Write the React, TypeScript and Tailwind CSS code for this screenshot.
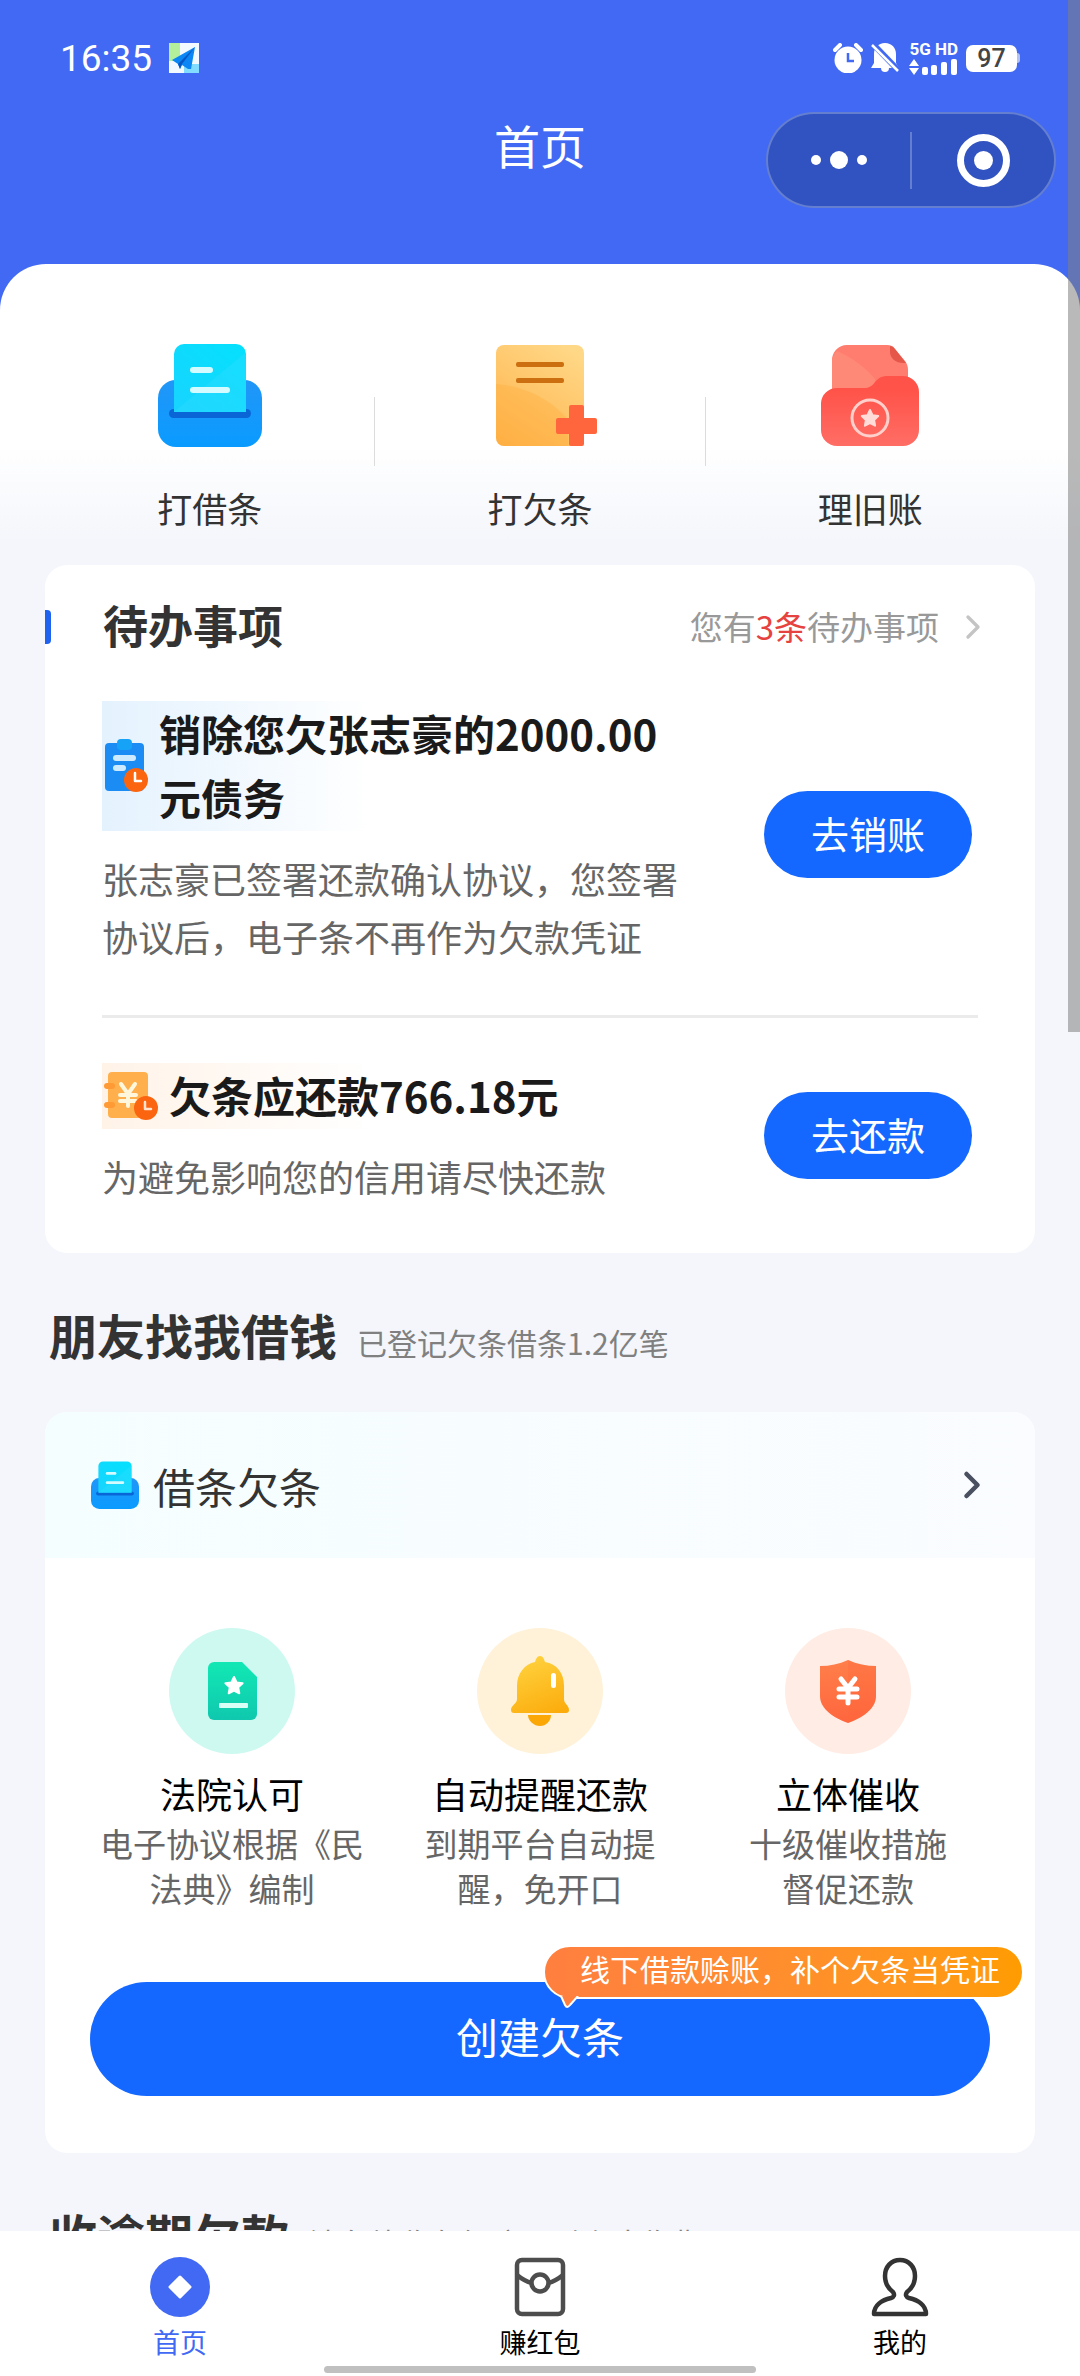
import { ChevronRight } from "lucide-react";
import type { ReactNode } from "react";

const TrayIcon = ({ className, id }: { className?: string; id: string }) => (
  <svg viewBox="0 0 104 104" className={className} fill="none">
    <defs>
      <linearGradient id={`${id}-tray`} x1="0" y1="37" x2="0" y2="104" gradientUnits="userSpaceOnUse">
        <stop stopColor="#2196f8" />
        <stop offset="1" stopColor="#0a9bff" />
      </linearGradient>
      <linearGradient id={`${id}-paper`} x1="80" y1="0" x2="20" y2="70" gradientUnits="userSpaceOnUse">
        <stop stopColor="#05e0fd" />
        <stop offset="1" stopColor="#18d4ff" />
      </linearGradient>
    </defs>
    <rect x="0" y="37" width="104" height="67" rx="18" fill={`url(#${id}-tray)`} />
    <rect x="11" y="66" width="82" height="9" rx="4.5" fill="#0a66d6" />
    <path d="M16 69V11A10 10 0 0 1 26 1h52a10 10 0 0 1 10 10v58Z" fill={`url(#${id}-paper)`} />
    <path d="M16 69 88 9v60Z" fill="#35dcff" opacity=".35" />
    <rect x="32" y="24" width="23" height="6" rx="3" fill="#d4fbff" />
    <rect x="32" y="44" width="40" height="6" rx="3" fill="#d4fbff" />
  </svg>
);

const NoteIcon = () => (
  <svg viewBox="0 0 120 104" className="h-[104px] w-[120px]" fill="none">
    <defs>
      <linearGradient id="note" x1="90" y1="4" x2="24" y2="104" gradientUnits="userSpaceOnUse">
        <stop stopColor="#ffd887" />
        <stop offset="1" stopColor="#ffb24a" />
      </linearGradient>
    </defs>
    <rect x="16" y="2" width="88" height="101" rx="8" fill="url(#note)" />
    <path d="M16 41c28 2 56 16 72 36v26H24a8 8 0 0 1-8-8Z" fill="#ffab38" opacity=".35" />
    <rect x="36" y="19" width="48" height="5" rx="2" fill="#cc6f10" />
    <rect x="36" y="35" width="48" height="5" rx="2" fill="#cc6f10" />
    <rect x="89" y="62" width="15" height="41" rx="2" fill="#ff663d" />
    <rect x="76" y="75" width="41" height="16" rx="2" fill="#ff663d" />
  </svg>
);

const FolderIcon = () => (
  <svg viewBox="0 0 120 104" className="h-[104px] w-[120px]" fill="none">
    <defs>
      <linearGradient id="folder" x1="0" y1="33" x2="0" y2="104" gradientUnits="userSpaceOnUse">
        <stop offset=".2" stopColor="#ff5349" />
        <stop offset="1" stopColor="#ff6e66" />
      </linearGradient>
    </defs>
    <path d="M22 60V18A15 15 0 0 1 37 2h40c4 0 6 1 8 4l10 12c2 3 3 5 3 9v33Z" fill="#ff7d6e" />
    <path d="M22 60V18c0-4 2-7 5-10 16 7 29 17 38 28v24Z" fill="#ff8f7a" opacity=".7" />
    <path d="M80 3v6c0 6 6 12 16 11L85 6Q83 3 80 3Z" fill="#e45749" />
    <path
      d="M11 60A16 16 0 0 1 27 45h27c5 0 8-2 11-6s7-6 11-6h17a16 16 0 0 1 16 16v38a16 16 0 0 1-16 16H27a16 16 0 0 1-16-16Z"
      fill="url(#folder)"
    />
    <circle cx="60" cy="75" r="18" stroke="#ffd0cb" strokeWidth="3" />
    <path
      d="m60 67 2.500 5.200 5.700.800-4.100 4 1 5.700-5.100-2.700-5.100 2.700 1-5.700-4.100-4 5.700-.800Z"
      fill="#ffdcd8"
      stroke="#ffdcd8"
      strokeWidth="2"
      strokeLinejoin="round"
    />
  </svg>
);

const ClipboardIcon = () => (
  <svg viewBox="0 0 44 54" className="h-[54px] w-[44px] shrink-0" fill="none">
    <rect x="1" y="4" width="39" height="48" rx="4" fill="#1c8cf5" />
    <rect x="13" y="0" width="15" height="11" rx="4" fill="#16a3f7" />
    <rect x="9" y="16" width="23" height="6" rx="3" fill="#cdeaff" />
    <rect x="9" y="26" width="13" height="6" rx="3" fill="#cdeaff" />
    <circle cx="32" cy="41" r="12" fill="#fb6510" />
    <path d="M31 34v8h6" stroke="#fff" strokeWidth="2.5" strokeLinecap="round" strokeLinejoin="round" />
  </svg>
);

const LedgerIcon = () => (
  <svg viewBox="1 0 54 50" className="h-[50px] w-[54px] shrink-0" fill="none">
    <rect x="5" y="1" width="40" height="46" rx="4" fill="#ffb04d" />
    <rect x="1" y="12" width="11" height="6" rx="3" fill="#ff9a35" />
    <rect x="1" y="31" width="11" height="6" rx="3" fill="#ff9a35" />
    <path d="m18 13 7 10 7-10M25 23v12M17 24h16M17 30h16" stroke="#fff7dc" strokeWidth="4" strokeLinecap="round" />
    <circle cx="43" cy="37" r="12" fill="#fb6510" />
    <path d="M42 31v7h6" stroke="#ffe3cf" strokeWidth="2.5" strokeLinecap="round" strokeLinejoin="round" />
  </svg>
);

const CourtIcon = () => (
  <svg viewBox="0 0 126 126" className="size-[126px]" fill="none">
    <defs>
      <linearGradient id="court" x1="0" y1="34" x2="0" y2="92" gradientUnits="userSpaceOnUse">
        <stop stopColor="#12e8b4" />
        <stop offset="1" stopColor="#0fc8ae" />
      </linearGradient>
    </defs>
    <circle cx="63" cy="63" r="63" fill="#cef9f1" />
    <path d="M39 40a6 6 0 0 1 6-6h28l15 15v37a6 6 0 0 1-6 6H45a6 6 0 0 1-6-6Z" fill="url(#court)" />
    <path
      d="m65 49 2.600 5.400 6 .800-4.400 4.200 1.100 5.900-5.300-2.800-5.300 2.800 1.100-5.900-4.400-4.200 6-.800Z"
      fill="#fff"
      stroke="#fff"
      strokeWidth="2"
      strokeLinejoin="round"
    />
    <rect x="50" y="75" width="29" height="5" rx="1" fill="#d8fff5" />
  </svg>
);

const BellIcon = () => (
  <svg viewBox="0 0 126 126" className="size-[126px]" fill="none">
    <defs>
      <linearGradient id="bell" x1="50" y1="30" x2="76" y2="96" gradientUnits="userSpaceOnUse">
        <stop stopColor="#ffd13d" />
        <stop offset="1" stopColor="#fba706" />
      </linearGradient>
    </defs>
    <circle cx="63" cy="63" r="63" fill="#fff2d9" />
    <path
      d="M63 28c3 0 4 3 5 6 12 2 19 11 19 24v13c0 5 5 6 5 11 0 2-1 3-3 3H37c-2 0-3-1-3-3 0-5 6-6 6-11V58c0-13 8-22 18-24 1-3 2-6 5-6Z"
      fill="url(#bell)"
    />
    <path d="M51 87h23c0 6-5 11-11 11s-12-5-12-11Z" fill="#fba706" />
    <rect x="74" y="45" width="5" height="15" rx="2.5" fill="#fff" />
  </svg>
);

const ShieldIcon = () => (
  <svg viewBox="0 0 126 126" className="size-[126px]" fill="none">
    <defs>
      <linearGradient id="shield" x1="0" y1="32" x2="0" y2="95" gradientUnits="userSpaceOnUse">
        <stop stopColor="#ff7f4a" />
        <stop offset="1" stopColor="#ff663e" />
      </linearGradient>
    </defs>
    <circle cx="63" cy="63" r="63" fill="#ffece4" />
    <path d="M63 32c9 4 18 6 28 6v30c0 13-14 22-28 27-14-5-28-14-28-27V38c10 0 19-2 28-6Z" fill="url(#shield)" />
    <path d="M63 32c9 4 18 6 28 6v30c0 13-14 22-28 27Z" fill="#ff6337" opacity=".25" />
    <path d="m56 51 7 9 7-9M63 60v15M54 61h18M54 69h18" stroke="#fff" strokeWidth="5" strokeLinecap="round" />
  </svg>
);

const HomeTabIcon = () => (
  <svg viewBox="0 0 60 60" className="size-[60px]">
    <circle cx="30" cy="30" r="30" fill="#4169f3" />
    <path d="m30 20 10 10-10 10-10-10Z" fill="#fff" stroke="#fff" strokeWidth="3" strokeLinejoin="round" />
  </svg>
);

const PacketTabIcon = () => (
  <svg viewBox="0 0 60 60" className="size-[60px]" fill="none" stroke="#4d4d4d" strokeWidth="4.5">
    <rect x="7" y="3" width="46" height="54" rx="5" />
    <path d="M7 18c6 5 11 7 15 8M53 18c-6 5-11 7-15 8" />
    <circle cx="30" cy="26" r="8.5" />
  </svg>
);

const UserTabIcon = () => (
  <svg viewBox="0 0 60 60" className="size-[60px]" fill="none" stroke="#333" strokeWidth="4.5" strokeLinejoin="round">
    <path d="M30 3c9 0 15 7 15 16 0 7-4 13-8 16-2 3-1 5 2 6 9 2 17 7 17 16H4c0-9 8-14 17-16 3-1 4-3 2-6-4-3-8-9-8-16C15 10 21 3 30 3Z" />
  </svg>
);

const StatusBar = () => (
  <div className="flex h-[112px] items-center justify-between px-[60px] pt-1 text-white">
    <div className="flex items-center gap-[17px]">
      <span className="font-[Roboto] text-[37px] leading-none">16:35</span>
      <svg viewBox="0 0 30 30" className="size-[30px]">
        <rect width="30" height="30" fill="#f2f9ff" />
        <rect width="11" height="18" fill="#b4ef9c" />
        <rect x="15" y="21" width="15" height="9" fill="#82dcff" />
        <path d="M26 4 3 17l6 4 2 5 2-4 6 4h3Z" fill="#0a86f5" />
        <path d="M26 4 9 21l2 5 2-5Z" fill="#0657c4" />
      </svg>
    </div>
    <div className="flex items-center">
      <svg viewBox="0 0 30 30" className="mr-2 size-[30px]">
        <circle cx="15" cy="17" r="13.5" fill="#fff" />
        <path d="m2 7 5-5M28 7l-5-5" stroke="#fff" strokeWidth="4" strokeLinecap="round" />
        <path d="M15 10v8h6" fill="none" stroke="#4169f3" strokeWidth="2.5" />
      </svg>
      <svg viewBox="0 0 28 32" className="mr-[10px] h-[32px] w-[28px]">
        <path d="M14 1c7 0 11 5 11 11v9l3 5H18a4 4 0 0 1-8 0H0l3-5v-9C3 6 7 1 14 1Z" fill="#fff" />
        <path d="m-1 -1 30 31" stroke="#4169f3" strokeWidth="6" />
        <path d="m1 3 26 26" stroke="#fff" strokeWidth="2.5" />
      </svg>
      <div className="mr-[8px] flex flex-col gap-px">
        <span className="font-[Roboto] text-[17px] leading-[17px] font-bold">5G HD</span>
        <svg viewBox="0 0 48 16" className="h-[16px] w-[48px]" fill="#fff">
          <path d="M5 0l5 7H0ZM5 16l5-7H0Z" />
          <rect x="13" y="8" width="6" height="8" rx="2" />
          <rect x="22" y="6" width="6" height="10" rx="2" />
          <rect x="32" y="3" width="6" height="13" rx="2" />
          <rect x="42" y="0" width="6" height="16" rx="2" />
        </svg>
      </div>
      <span className="flex h-[27px] w-[51px] items-center justify-center rounded-[7px] bg-white font-[Roboto] text-[25px] leading-none font-medium text-[#444]">
        97
      </span>
      <span className="h-[10px] w-[3px] rounded-r bg-white/60" />
    </div>
  </div>
);

const Header = () => (
  <header>
    <StatusBar />
    <div className="grid h-[152px] grid-cols-[1fr_auto_1fr] items-start">
      <h1 className="col-start-2 text-[46px] leading-[64px] text-white">首页</h1>
      <div className="mr-6 flex h-[96px] w-[290px] items-center justify-self-end rounded-full border-2 border-white/25 bg-[#3153c1]">
        <button type="button" aria-label="更多" className="flex flex-1 items-center justify-center gap-[9px]">
          <span className="size-[10px] rounded-full bg-white" />
          <span className="size-[18px] rounded-full bg-white" />
          <span className="size-[10px] rounded-full bg-white" />
        </button>
        <span className="h-[57px] w-[2px] bg-white/25" />
        <button type="button" aria-label="关闭" className="flex flex-1 items-center justify-center">
          <span className="flex size-[53px] items-center justify-center rounded-full border-[7px] border-white">
            <span className="size-[19px] rounded-full bg-white" />
          </span>
        </button>
      </div>
    </div>
  </header>
);

const QuickAction = ({ icon, label }: { icon: ReactNode; label: string }) => (
  <a href="#" className="flex flex-1 flex-col items-center gap-9">
    {icon}
    <span className="text-[35px] leading-[50px] text-[#333]">{label}</span>
  </a>
);

interface TodoItemProps {
  icon: ReactNode;
  title: string;
  desc: string;
  action: string;
  tint: string;
}

const TodoItem = ({ icon, title, desc, action, tint }: TodoItemProps) => (
  <li className="flex items-center justify-between border-b-[3px] border-[#ebebeb] py-[45px] first:pt-3 first:pb-[47px] last:border-b-0">
    <div className="w-[582px]">
      <div className={`flex items-center bg-[length:270px_100%] bg-no-repeat pl-[2px] ${tint}`}>
        {icon}
        <h3 className="ml-[11px] pb-[2px] text-[42px] leading-[64px] font-bold text-[#1a1a1a]">{title}</h3>
      </div>
      <p className="mt-[18px] pb-[3px] text-[36px] leading-[58px] text-[#666]">{desc}</p>
    </div>
    <button type="button" className="mr-[6px] h-[87px] w-[208px] rounded-full bg-[#1468ff] pb-[5px] text-[38px] text-white">
      {action}
    </button>
  </li>
);

const SectionTitle = ({ title, note }: { title: string; note: string }) => (
  <div className="flex items-baseline gap-[20px] pt-[45px] pb-[42px] pl-1">
    <h2 className="text-[48px] leading-[72px] font-bold text-[#333]">{title}</h2>
    <span className="text-[30px] text-[#808080]">{note}</span>
  </div>
);

const features = [
  { icon: <CourtIcon />, title: "法院认可", lines: ["电子协议根据《民", "法典》编制"] },
  { icon: <BellIcon />, title: "自动提醒还款", lines: ["到期平台自动提", "醒，免开口"] },
  { icon: <ShieldIcon />, title: "立体催收", lines: ["十级催收措施", "督促还款"] },
];

const LoanCard = () => (
  <section className="rounded-[22px] bg-white pb-[57px]">
    <a
      href="#"
      className="flex h-[146px] items-center rounded-t-[22px] bg-linear-to-r from-[#f5feff] to-[#fafcff] pr-[41px] pl-[46px]"
    >
      <TrayIcon id="loan" className="size-[48px]" />
      <span className="ml-[14px] flex-1 text-[42px] text-[#333]">借条欠条</span>
      <ChevronRight className="size-[44px] text-[#4a5060]" strokeWidth={2.5} />
    </a>
    <ul className="grid grid-cols-3 px-[33px] pt-[70px]">
      {features.map((feature) => (
        <li key={feature.title} className="flex flex-col items-center">
          {feature.icon}
          <h3 className="mt-[14px] mb-[3px] text-[36px] leading-[50px] text-black">{feature.title}</h3>
          <p className="text-center text-[33px] leading-[45px] text-[#666]">
            {feature.lines.map((line) => (
              <span key={line} className="block">
                {line}
              </span>
            ))}
          </p>
        </li>
      ))}
    </ul>
    <div className="relative mx-[45px] mt-[71px]">
      <button type="button" className="h-[114px] w-full rounded-full bg-[#1468ff] pb-[8px] text-[42px] text-white">
        创建欠条
      </button>
      {/* Promo bubble */}
      <div className="absolute -top-[37px] -right-[34px]">
        <div className="h-[54px] rounded-full border-2 border-white bg-linear-to-r from-[#ff7f3f] to-[#ff9c00] pr-[22px] pl-[35px] text-[30px] leading-[42px] text-white">
          线下借款赊账，补个欠条当凭证
        </div>
        <svg viewBox="0 0 20 14" className="absolute top-[51px] left-[16px] h-[14px] w-[20px]">
          <path d="M2 0 6 9q2 4 5 0l8-9" fill="#ff7f3f" stroke="#fff" strokeWidth="2" />
        </svg>
      </div>
    </div>
  </section>
);

const tabs = [
  { icon: <HomeTabIcon />, label: "首页", color: "text-[#4169f3]" },
  { icon: <PacketTabIcon />, label: "赚红包", color: "text-black" },
  { icon: <UserTabIcon />, label: "我的", color: "text-black" },
];

const TabBar = () => (
  <nav className="bg-white">
    <div className="grid grid-cols-3 pt-[26px]">
      {tabs.map((tab) => (
        <a key={tab.label} href="#" className={`flex flex-col items-center gap-[5px] ${tab.color}`}>
          {tab.icon}
          <span className="text-[27px] leading-[40px]">{tab.label}</span>
        </a>
      ))}
    </div>
    <div className="mx-auto mt-1 mb-[3px] h-[7px] w-2/5 rounded-full bg-[#c0c0c0]" />
  </nav>
);

export default function App() {
  return (
    <div
      lang="zh-CN"
      className="relative flex h-screen flex-col overflow-hidden bg-[#4169f3] font-['Noto_Sans_CJK_SC',sans-serif]"
    >
      <Header />
      <main className="min-h-0 flex-1 overflow-hidden rounded-t-[46px] bg-[#f4f6fb] bg-[linear-gradient(to_bottom,#fff_180px,#f4f6fb_280px)] px-[45px] pt-[79px]">
        <div className="flex pb-8">
          <QuickAction icon={<TrayIcon id="quick" className="size-[104px]" />} label="打借条" />
          <span className="mt-[54px] h-[69px] w-px bg-[#dcdcdc]" />
          <QuickAction icon={<NoteIcon />} label="打欠条" />
          <span className="mt-[54px] h-[69px] w-px bg-[#dcdcdc]" />
          <QuickAction icon={<FolderIcon />} label="理旧账" />
        </div>

        <section className="rounded-[22px] bg-white">
          <div className="flex h-[124px] items-center pr-[42px]">
            <span className="h-[34px] w-[6px] rounded-r-sm bg-[#1f62f0]" />
            <h2 className="ml-[52px] flex-1 pb-1 text-[45px] font-bold text-[#333]">待办事项</h2>
            <a href="#" className="flex items-center text-[33px] text-[#999]">
              <span>
                您有<span className="text-[#e64340]">3条</span>待办事项
              </span>
              <ChevronRight className="ml-[14px] size-[40px] text-[#c4c4c4]" strokeWidth={2} />
            </a>
          </div>
          <ul className="px-[57px]">
            <TodoItem
              icon={<ClipboardIcon />}
              title="销除您欠张志豪的2000.00元债务"
              desc="张志豪已签署还款确认协议，您签署协议后，电子条不再作为欠款凭证"
              action="去销账"
              tint="bg-[linear-gradient(to_right,#e4f2fe,#fff)]"
            />
            <TodoItem
              icon={<LedgerIcon />}
              title="欠条应还款766.18元"
              desc="为避免影响您的信用请尽快还款"
              action="去还款"
              tint="bg-[linear-gradient(to_right,#fff3e8,#fff)]"
            />
          </ul>
        </section>

        <SectionTitle title="朋友找我借钱" note="已登记欠条借条1.2亿笔" />
        <LoanCard />
        <SectionTitle title="收逾期欠款" note="法务催收有保障，到账才收费" />
      </main>
      <TabBar />
      {/* Page scroll thumb */}
      <div className="absolute top-0 right-0 h-[1032px] w-3 bg-[#7f7f7f]/55" />
    </div>
  );
}
